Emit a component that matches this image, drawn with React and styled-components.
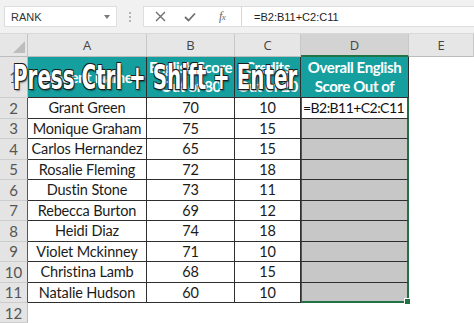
import React, { useLayoutEffect, useRef, useState } from "react";
import styled, { createGlobalStyle } from "styled-components";

const GREEN = "#217346";
const TEAL = "#169f9f";
const LINE = "#2e2e2e";

const GlobalStyle = createGlobalStyle`
  html, body {
    margin: 0;
    padding: 0;
    background: #fff;
    overflow: hidden;
  }
  body {
    font-family: Lato, "Liberation Sans", sans-serif;
  }
`;

const Window = styled.div`
  width: 474px;
  height: 323px;
  position: relative;
  overflow: hidden;
  display: flex;
  flex-direction: column;
`;

/* ---------- formula bar ---------- */

const FormulaBar = styled.div`
  height: 34px;
  flex: none;
  box-sizing: border-box;
  background: #f1f1f1;
  border-bottom: 1px solid #d8d8d8;
  display: flex;
  align-items: center;
  padding-left: 4px;
`;

const NameBox = styled.div`
  width: 113px;
  height: 21px;
  box-sizing: border-box;
  background: #fff;
  border: 1px solid #dedede;
  display: flex;
  align-items: center;
  justify-content: space-between;
  padding: 0 6px 0 6px;
  font: 11px "Liberation Sans", Arial, sans-serif;
  color: #333;
`;

const Caret = styled.span`
  width: 0;
  height: 0;
  border-left: 3.5px solid transparent;
  border-right: 3.5px solid transparent;
  border-top: 4px solid #7a7a7a;
`;

const Grip = styled.div`
  margin: 0 12px 0 12px;
  display: flex;
  flex-direction: column;
  gap: 2px;

  span {
    width: 2px;
    height: 2px;
    background: #b4b4b4;
  }
`;

const FormulaBox = styled.div`
  flex: 1;
  height: 21px;
  box-sizing: border-box;
  background: #fff;
  border: 1px solid #dedede;
  border-right: none;
  display: flex;
  align-items: center;
`;

const Tools = styled.div`
  width: 98px;
  height: 100%;
  box-sizing: border-box;
  border-right: 1px solid #d6d6d6;
  display: flex;
  align-items: center;
  padding-left: 11px;
`;

const Tool = styled.span`
  display: inline-flex;
  align-items: center;
  margin-left: ${(p) => p.$ml || 0}px;
  color: #6d6d6d;
`;

const Fx = styled.span`
  font: italic 12px "Liberation Serif", serif;
  color: #666;
  letter-spacing: -0.5px;

  small {
    font-size: 9px;
  }
`;

const FormulaText = styled.div`
  padding-left: 12px;
  font: 11px "Liberation Sans", Arial, sans-serif;
  color: #222;
`;

/* ---------- sheet ---------- */

const Sheet = styled.div`
  flex: 1;
  display: grid;
  grid-template-columns: 28px 119px 88px 66px 108px 1fr;
  grid-template-rows: 23px 41px repeat(10, 20.5px) 1fr;
`;

const Corner = styled.div`
  background: #e6e6e6;
  border-right: 1px solid #c4c4c4;
  border-bottom: 1px solid #bcbcbc;
  box-sizing: border-box;
  position: relative;

  &::after {
    content: "";
    position: absolute;
    right: 2px;
    bottom: 3px;
    width: 0;
    height: 0;
    border-left: 12px solid transparent;
    border-bottom: 12px solid #bdbdbd;
  }
`;

const ColHead = styled.div`
  background: ${(p) => (p.$sel ? "#d3d3d3" : "#e6e6e6")};
  border-right: 1px solid #c8c8c8;
  border-bottom: ${(p) => (p.$sel ? `2px solid ${GREEN}` : "1px solid #bcbcbc")};
  box-sizing: border-box;
  display: flex;
  align-items: center;
  justify-content: center;
  font: 13px "Open Sans", sans-serif;
  color: #444;
`;

const RowHead = styled.div`
  background: #e4e4e4;
  border-bottom: 1px solid #cdcdcd;
  border-right: 1px solid ${(p) => (p.$sel ? GREEN : "#bcbcbc")};
  box-sizing: border-box;
  display: flex;
  align-items: center;
  justify-content: center;
  font-size: 15px;
  color: #555;
`;

const Title = styled.div`
  background: ${TEAL};
  border-right: 1px solid ${LINE};
  border-bottom: 1px solid ${LINE};
  box-sizing: border-box;
  display: flex;
  align-items: center;
  justify-content: center;
  text-align: center;
  font-weight: 700;
  font-size: 15px;
  letter-spacing: -0.4px;
  line-height: 19px;
  color: #fff;
  overflow: hidden;
  white-space: nowrap;
`;

const Cell = styled.div`
  background: #fff;
  border-right: 1px solid ${LINE};
  border-bottom: 1px solid ${LINE};
  box-sizing: border-box;
  display: flex;
  align-items: center;
  justify-content: center;
  font-size: 14.5px;
  letter-spacing: -0.15px;
  color: #1b1b1b;
  white-space: nowrap;
`;

const SelCell = styled.div`
  position: relative;
  background: ${(p) => (p.$active ? "#fff" : "#c7c7c7")};
  border-right: 2px solid ${GREEN};
  border-bottom: ${(p) => (p.$last ? `2px solid ${GREEN}` : `1px solid ${LINE}`)};
  box-shadow: inset 1px 0 0 ${GREEN};
  box-sizing: border-box;
  display: flex;
  align-items: center;
  padding-left: 2px;
  font-size: 14px;
  letter-spacing: -0.55px;
  color: #111;
  white-space: nowrap;
`;

const Handle = styled.span`
  position: absolute;
  right: -4px;
  bottom: -4px;
  width: 5px;
  height: 5px;
  background: ${GREEN};
  border: 1px solid #fff;
  z-index: 2;
`;

const Blank = styled.div`
  background: #fff;
`;

const BannerText = styled.div`
  position: absolute;
  left: 13px;
  top: 61px;
  display: inline-block;
  white-space: nowrap;
  transform-origin: left center;
  font-family: "Liberation Sans Narrow", "DejaVu Sans Condensed", "Liberation Sans", sans-serif;
  font-weight: 700;
  font-size: 33px;
  line-height: 33px;
  color: #fff;
  text-shadow:
    -1px -1px 0 #1c1c1c,
    1px -1px 0 #1c1c1c,
    -1px 1px 0 #1c1c1c,
    1px 1px 0 #1c1c1c,
    2px 2px 2px rgba(0, 0, 0, 0.45);
  z-index: 5;
`;

const rows = [
  ["Grant Green", 70, 10],
  ["Monique Graham", 75, 15],
  ["Carlos Hernandez", 65, 15],
  ["Rosalie Fleming", 72, 18],
  ["Dustin Stone", 73, 11],
  ["Rebecca Burton", 69, 12],
  ["Heidi Diaz", 74, 18],
  ["Violet Mckinney", 71, 10],
  ["Christina Lamb", 68, 15],
  ["Natalie Hudson", 60, 10],
];

// stretch the caption so it spans the same width as in the screenshot
const Banner = () => {
  const ref = useRef(null);
  const [scale, setScale] = useState(1);
  useLayoutEffect(() => {
    if (ref.current) setScale(284 / ref.current.offsetWidth);
  }, []);
  return (
    <BannerText ref={ref} style={{ transform: `scaleX(${scale})` }}>
      Press Ctrl + Shift + Enter
    </BannerText>
  );
};

const CloseIcon = () => (
  <svg width="11" height="11" viewBox="0 0 11 11">
    <path d="M1 1 L10 10 M10 1 L1 10" stroke="#6f6f6f" strokeWidth="1.4" fill="none" />
  </svg>
);

const CheckIcon = () => (
  <svg width="12" height="10" viewBox="0 0 12 10">
    <path d="M1 5 L4.5 8.5 L11 1.5" stroke="#6f6f6f" strokeWidth="1.8" fill="none" />
  </svg>
);

export default function App() {
  return (
    <Window>
      <GlobalStyle />
      <FormulaBar>
        <NameBox>
          RANK
          <Caret />
        </NameBox>
        <Grip>
          <span />
          <span />
          <span />
        </Grip>
        <FormulaBox>
          <Tools>
            <Tool>
              <CloseIcon />
            </Tool>
            <Tool $ml={18}>
              <CheckIcon />
            </Tool>
            <Tool $ml={23}>
              <Fx>
                f<small>x</small>
              </Fx>
            </Tool>
          </Tools>
          <FormulaText>=B2:B11+C2:C11</FormulaText>
        </FormulaBox>
      </FormulaBar>

      <Sheet>
        <Corner />
        <ColHead>A</ColHead>
        <ColHead>B</ColHead>
        <ColHead>C</ColHead>
        <ColHead $sel>D</ColHead>
        <ColHead>E</ColHead>

        <RowHead>1</RowHead>
        <Title>Student Name</Title>
        <Title>
          English Score
          <br />
          Out of 80
        </Title>
        <Title>
          Credits
          <br />
          Out of 20
        </Title>
        <Title>
          Overall English
          <br />
          Score Out of
        </Title>
        <Blank />

        {rows.map(([name, score, credit], i) => (
          <React.Fragment key={name}>
            <RowHead $sel>{i + 2}</RowHead>
            <Cell>{name}</Cell>
            <Cell>{score}</Cell>
            <Cell>{credit}</Cell>
            <SelCell $active={i === 0} $last={i === rows.length - 1}>
              {i === 0 ? "=B2:B11+C2:C11" : null}
              {i === rows.length - 1 ? <Handle /> : null}
            </SelCell>
            <Blank />
          </React.Fragment>
        ))}

        <RowHead>12</RowHead>
        <Blank />
        <Blank />
        <Blank />
        <Blank />
        <Blank />
      </Sheet>
      <Banner />
    </Window>
  );
}
